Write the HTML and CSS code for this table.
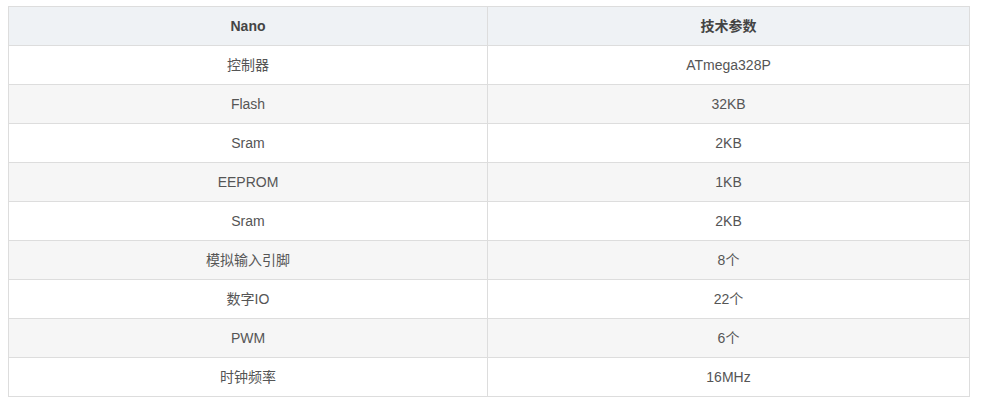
FILE: index.html
```html
<!DOCTYPE html>
<html>
<head>
<meta charset="utf-8">
<link rel="stylesheet" href="styles.css">
</head>
<body>
<table class="spec">
  <thead>
    <tr><th class="c1">Nano</th><th>技术参数</th></tr>
  </thead>
  <tbody>
    <tr><td>控制器</td><td>ATmega328P</td></tr>
    <tr><td>Flash</td><td>32KB</td></tr>
    <tr><td>Sram</td><td>2KB</td></tr>
    <tr><td>EEPROM</td><td>1KB</td></tr>
    <tr><td>Sram</td><td>2KB</td></tr>
    <tr><td>模拟输入引脚</td><td>8个</td></tr>
    <tr><td>数字IO</td><td>22个</td></tr>
    <tr><td>PWM</td><td>6个</td></tr>
    <tr><td>时钟频率</td><td>16MHz</td></tr>
  </tbody>
</table>
</body>
</html>
```
FILE: styles.css
```css
html, body {
  margin: 0;
  padding: 0;
  background: #fff;
}
body {
  padding: 6px 0 0 8px;
  font-family: "Liberation Sans", Arial, "Noto Sans CJK SC", sans-serif;
  font-size: 14px;
  color: #555;
}
.spec {
  border-collapse: collapse;
  width: 962px;
  table-layout: fixed;
}
.spec th, .spec td {
  border: 1px solid #ddd;
  height: 39px;
  padding: 0 8px;
  text-align: center;
  vertical-align: middle;
  box-sizing: border-box;
  line-height: 20px;
}
.spec .c1 {
  width: 479px;
}
.spec th {
  background: #eff2f5;
  font-weight: bold;
  color: #444;
}
.spec tbody tr:nth-child(even) td {
  background: #f6f6f6;
}
```
